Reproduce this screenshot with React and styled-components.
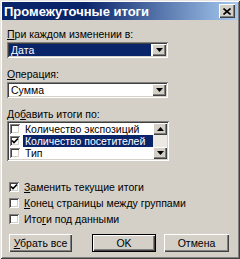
import React from 'react';
import styled, { createGlobalStyle } from 'styled-components';

const Global = createGlobalStyle`
  html, body { margin: 0; padding: 0; background: #d4d0c8; }
  body { width: 240px; height: 259px; overflow: hidden; }
`;

const Window = styled.div`
  box-sizing: border-box;
  width: 240px;
  height: 259px;
  padding: 2px;
  background: #d4d0c8;
  box-shadow: inset 1px 1px #e8e6e2, inset -1px -1px #404040, inset 2px 2px #ffffff, inset -2px -2px #808080;
  font-family: "Liberation Sans", Arial, sans-serif;
  font-size: 10.5px;
  color: #000;
  display: flex;
  flex-direction: column;
`;

const TitleBar = styled.div`
  height: 18px;
  flex: none;
  display: flex;
  align-items: center;
  justify-content: space-between;
  padding: 0 3px 0 2px;
  background: linear-gradient(to right, #0a246a 0%, #0a246a 35%, #a6caf0 100%);
`;

const Title = styled.span`
  color: #fff;
  font-weight: bold;
  font-size: 13px;
`;

const CloseButton = styled.div`
  width: 16px;
  height: 14px;
  box-sizing: border-box;
  background: #d4d0c8;
  box-shadow: inset 1px 1px #ffffff, inset -1px -1px #404040, inset -2px -2px #808080;
  display: flex;
  align-items: center;
  justify-content: center;
`;

const Content = styled.div`
  flex: 1;
  display: flex;
  flex-direction: column;
  padding: 8px 7px 0 5px;
`;

const Label = styled.div`
  line-height: 13px;
  height: 13px;
  margin-top: ${p => p.$top || 0}px;
  white-space: nowrap;
`;

const Sunken = styled.div`
  box-sizing: border-box;
  background: #fff;
  box-shadow: inset 1px 1px #808080, inset -1px -1px #ffffff, inset 2px 2px #404040, inset -2px -2px #d4d0c8;
  padding: 2px;
`;

const Combo = styled(Sunken)`
  width: 161px;
  height: 16px;
  margin-top: ${p => p.$top || 0}px;
  display: flex;
  align-items: stretch;
`;

const ComboValue = styled.div`
  flex: 1;
  display: flex;
  align-items: center;
  padding-left: 2px;
  line-height: 12px;
  background: ${p => (p.$selected ? '#0a246a' : 'transparent')};
  color: ${p => (p.$selected ? '#fff' : '#000')};
  margin-right: 1px;
`;

const RaisedBtn = styled.div`
  box-sizing: border-box;
  width: 14px;
  flex: none;
  background: #d4d0c8;
  box-shadow: inset 1px 1px #ffffff, inset -1px -1px #404040, inset -2px -2px #808080;
  display: flex;
  align-items: center;
  justify-content: center;
  height: ${p => (p.$h ? `${p.$h}px` : 'auto')};
`;

const ListBox = styled(Sunken)`
  width: 162px;
  height: 40px;
  display: flex;
`;

const Rows = styled.div`
  flex: 1;
  display: flex;
  flex-direction: column;
`;

const ListRow = styled.div`
  height: 12px;
  display: flex;
  align-items: center;
`;

const Box = styled.div`
  box-sizing: border-box;
  width: ${p => p.$size || 10}px;
  height: ${p => p.$size || 10}px;
  flex: none;
  margin-left: ${p => p.$ml ?? 1}px;
  background: #fff;
  box-shadow: inset 1px 1px #808080, inset -1px -1px #ffffff, inset 2px 2px #404040, inset -2px -2px #d4d0c8;
  display: flex;
  align-items: center;
  justify-content: center;
`;

const RowText = styled.div`
  flex: 1;
  margin-left: 3px;
  padding-left: 2px;
  line-height: 12px;
  height: 12px;
  white-space: nowrap;
  background: ${p => (p.$selected ? '#0a246a' : 'transparent')};
  color: ${p => (p.$selected ? '#fff' : '#000')};
`;

const Scrollbar = styled.div`
  width: 14px;
  flex: none;
  display: flex;
  flex-direction: column;
  background: #ece9e4;
`;

const Track = styled.div`
  flex: 1;
`;

const CheckRow = styled.label`
  display: flex;
  align-items: center;
  height: 16px;
  margin-top: ${p => p.$top || 0}px;
  padding-left: 2px;
`;

const CheckText = styled.span`
  margin-left: 5px;
  line-height: 13px;
  white-space: nowrap;
`;

const ButtonRow = styled.div`
  display: flex;
  margin-top: 7px;
  padding-left: 2px;
  padding-right: 2px;
`;

const PushButton = styled.div`
  box-sizing: border-box;
  width: ${p => p.$w}px;
  height: 18px;
  margin-left: ${p => p.$ml || '0px'};
  background: #d4d0c8;
  display: flex;
  align-items: center;
  justify-content: center;
  line-height: 13px;
  box-shadow: ${p =>
    p.$default
      ? 'inset 1px 1px #000, inset -1px -1px #000, inset 2px 2px #ffffff, inset -2px -2px #404040, inset -3px -3px #808080'
      : 'inset 1px 1px #ffffff, inset -1px -1px #404040, inset -2px -2px #808080'};
`;

const Arrow = ({ up }) => (
  <svg width="7" height="4" viewBox="0 0 7 4">
    <polygon points={up ? '3.5,0 7,4 0,4' : '0,0 7,0 3.5,4'} fill="#000" />
  </svg>
);

const Check = () => (
  <svg width="8" height="8" viewBox="0 0 8 8">
    <path d="M1 3.5 L3 5.5 L7 1.5" stroke="#000" strokeWidth="1.6" fill="none" />
  </svg>
);

const CloseX = () => (
  <svg width="8" height="7" viewBox="0 0 8 7">
    <path d="M0.5 0.5 L7.5 6.5 M7.5 0.5 L0.5 6.5" stroke="#000" strokeWidth="1.6" fill="none" />
  </svg>
);

export default function App() {
  return (
    <>
      <Global />
      <Window>
        <TitleBar>
          <Title>Промежуточные итоги</Title>
          <CloseButton>
            <CloseX />
          </CloseButton>
        </TitleBar>
        <Content>
          <Label><u>П</u>ри каждом изменении в:</Label>
          <Combo $top={1}>
            <ComboValue $selected>Дата</ComboValue>
            <RaisedBtn><Arrow /></RaisedBtn>
          </Combo>

          <Label $top={10}><u>О</u>перация:</Label>
          <Combo $top={1}>
            <ComboValue>Сумма</ComboValue>
            <RaisedBtn><Arrow /></RaisedBtn>
          </Combo>

          <Label $top={10}>До<u>б</u>авить итоги по:</Label>
          <ListBox>
            <Rows>
              <ListRow>
                <Box $size={10} />
                <RowText>Количество экспозиций</RowText>
              </ListRow>
              <ListRow>
                <Box $size={10}><Check /></Box>
                <RowText $selected>Количество посетителей</RowText>
              </ListRow>
              <ListRow>
                <Box $size={10} />
                <RowText>Тип</RowText>
              </ListRow>
            </Rows>
            <Scrollbar>
              <RaisedBtn $h={12}><Arrow up /></RaisedBtn>
              <Track />
              <RaisedBtn $h={12}><Arrow /></RaisedBtn>
            </Scrollbar>
          </ListBox>

          <CheckRow $top={18}>
            <Box $size={10} $ml={0}><Check /></Box>
            <CheckText><u>З</u>аменить текущие итоги</CheckText>
          </CheckRow>
          <CheckRow>
            <Box $size={10} $ml={0} />
            <CheckText><u>К</u>онец страницы между группами</CheckText>
          </CheckRow>
          <CheckRow>
            <Box $size={10} $ml={0} />
            <CheckText>Ито<u>г</u>и под данными</CheckText>
          </CheckRow>

          <ButtonRow>
            <PushButton $w={63}><span><u>У</u>брать все</span></PushButton>
            <PushButton $w={64} $ml="auto" $default>OK</PushButton>
            <PushButton $w={65} $ml="8px">Отмена</PushButton>
          </ButtonRow>
        </Content>
      </Window>
    </>
  );
}
